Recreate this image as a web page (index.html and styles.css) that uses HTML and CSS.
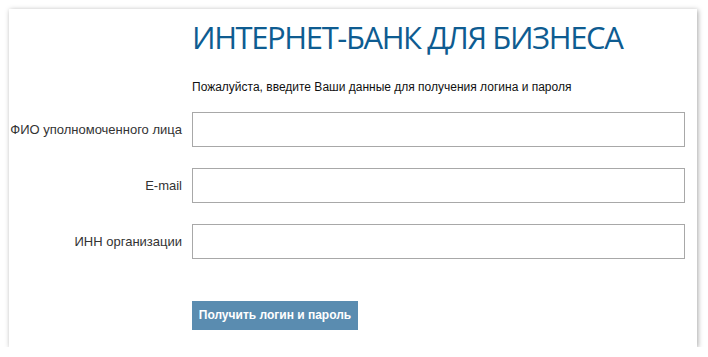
FILE: index.html
```html
<!DOCTYPE html>
<html lang="ru">
<head>
<meta charset="utf-8">
<link rel="stylesheet" href="styles.css">
</head>
<body>
<div class="card">
  <div class="row head">
    <div></div>
    <h1 class="title">ИНТЕРНЕТ-БАНК ДЛЯ БИЗНЕСА</h1>
  </div>
  <div class="row">
    <div></div>
    <p class="hint">Пожалуйста, введите Ваши данные для получения логина и пароля</p>
  </div>
  <div class="fields">
    <div class="row">
      <label class="label">ФИО уполномоченного лица</label>
      <div class="field"></div>
    </div>
    <div class="row">
      <label class="label">E-mail</label>
      <div class="field"></div>
    </div>
    <div class="row">
      <label class="label">ИНН организации</label>
      <div class="field"></div>
    </div>
  </div>
  <div class="row actions">
    <div></div>
    <div><span class="btn">Получить логин и пароль</span></div>
  </div>
</div>
</body>
</html>
```
FILE: styles.css
```css
html, body { margin: 0; padding: 0; background: #fff; }
body { font-family: "Liberation Sans", Arial, sans-serif; color: #222; }
.card {
  margin: 9px 0 0 9px;
  width: 688px;
  height: 338px;
  background: #fff;
  box-shadow: 1px 1px 5px rgba(0,0,0,0.35);
  box-sizing: border-box;
  padding-top: 8px;
}
.row {
  display: grid;
  grid-template-columns: 173px 493px;
  column-gap: 10px;
  align-items: center;
}
.title {
  margin: 0;
  font-family: "Open Sans", sans-serif;
  font-weight: 400;
  font-size: 31px;
  letter-spacing: -1.4px;
  line-height: 40px;
  color: #0e5c91;
  white-space: nowrap;
}
.hint {
  margin: 23px 0 18px;
  font-size: 12px;
  line-height: 14px;
  color: #111;
}
.fields {
  display: flex;
  flex-direction: column;
  gap: 21px;
}
.label {
  text-align: right;
  font-size: 13px;
  color: #333;
  white-space: nowrap;
}
.field {
  height: 35px;
  box-sizing: border-box;
  border: 1px solid #a8a8a8;
}
.actions { margin-top: 42px; }
.btn {
  display: inline-block;
  width: 166px;
  height: 29px;
  line-height: 29px;
  box-sizing: border-box;
  text-align: center;
  background: #5a8cb0;
  color: #fff;
  font-weight: 700;
  font-size: 12px;
}
```
